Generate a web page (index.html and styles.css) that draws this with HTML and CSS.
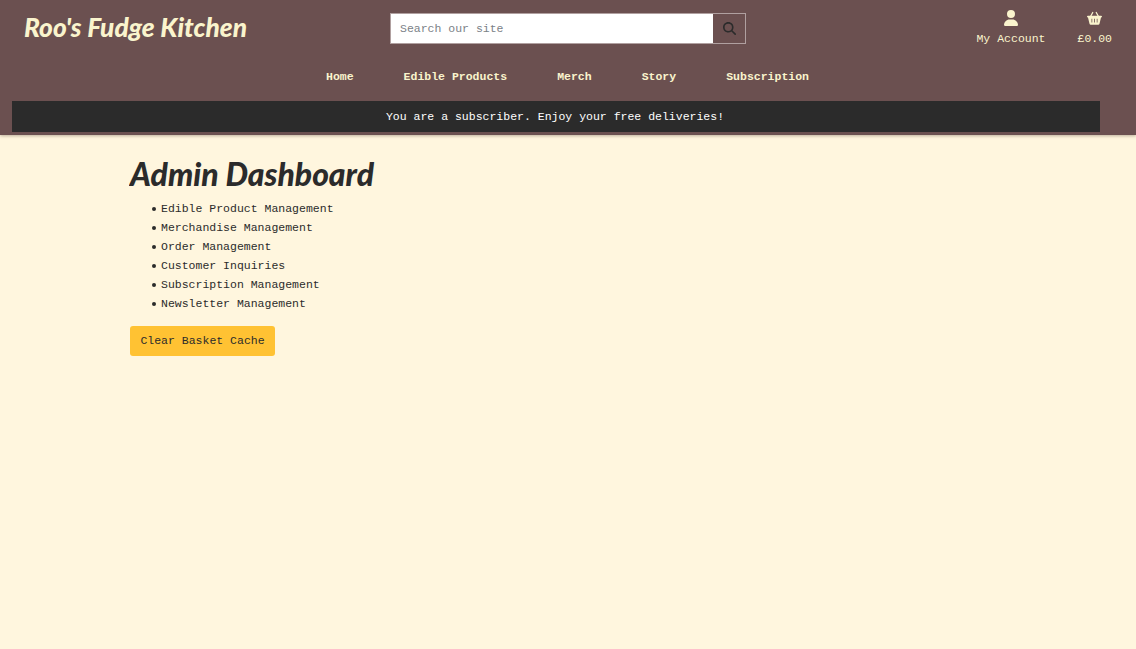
FILE: index.html
```html
<!DOCTYPE html>
<html lang="en">
<head>
<meta charset="utf-8">
<title>Roo's Fudge Kitchen</title>
<link rel="stylesheet" href="styles.css">
</head>
<body>
<header class="header">
  <div class="top">
    <a class="brand"><svg width="240" height="44"><text x="0" y="29" textLength="223" lengthAdjust="spacingAndGlyphs">Roo's Fudge Kitchen</text></svg></a>
    <form class="search">
      <input class="search-input" type="text" placeholder="Search our site">
      <button class="search-button" type="button" aria-label="Search"><svg width="13" height="13" viewBox="0 0 512 512"><path fill="currentColor" d="M416 208c0 45.900-14.900 88.300-40 122.700L502.600 457.400c12.500 12.500 12.500 32.800 0 45.300s-32.800 12.500-45.300 0L330.700 376c-34.400 25.200-76.800 40-122.700 40C93.100 416 0 322.900 0 208S93.100 0 208 0S416 93.100 416 208zM208 352a144 144 0 1 0 0-288 144 144 0 1 0 0 288z"/></svg></button>
    </form>
    <div class="links">
      <a class="link"><svg width="14" height="16" viewBox="0 0 448 512"><path fill="currentColor" d="M224 256A128 128 0 1 0 224 0a128 128 0 1 0 0 256zm-45.700 48C79.800 304 0 383.800 0 482.300C0 498.700 13.300 512 29.700 512H418.300c16.400 0 29.700-13.300 29.700-29.700C448 383.800 368.200 304 269.700 304H178.300z"/></svg><span>My Account</span></a>
      <a class="link"><svg width="15" height="16" viewBox="0 0 30 32"><path fill="none" stroke="currentColor" stroke-width="2.600" stroke-linecap="round" d="M7 13 11.500 5M23 13 18.500 5"/><path fill="currentColor" fill-rule="evenodd" d="M2 11.500H28Q30 11.500 30 13.200T28 15L25 27.500Q24.500 29.500 22.500 29.500H7.500Q5.500 29.500 5 27.500L2 15Q0 15 0 13.200T2 11.500ZM9 17.500V25H10.500V17.500ZM14.200 17.500V25H15.800V17.500ZM19.500 17.500V25H21V17.500Z"/></svg><span>£0.00</span></a>
    </div>
  </div>
  <nav class="nav"><a>Home</a><a>Edible Products</a><a>Merch</a><a>Story</a><a>Subscription</a></nav>
  <div class="banner">You are a subscriber. Enjoy your free deliveries!</div>
</header>
<main class="main">
  <h1 class="title"><svg width="280" height="42"><text x="1" y="31" textLength="244" lengthAdjust="spacingAndGlyphs">Admin Dashboard</text></svg></h1>
  <ul class="list">
    <li>Edible Product Management</li>
    <li>Merchandise Management</li>
    <li>Order Management</li>
    <li>Customer Inquiries</li>
    <li>Subscription Management</li>
    <li>Newsletter Management</li>
  </ul>
  <button class="clear" type="button">Clear Basket Cache</button>
</main>
</body>
</html>
```
FILE: styles.css
```css
* { box-sizing: border-box; }
body {
  margin: 0;
  min-height: 100vh;
  background: #fff6de;
  color: #2b2b2b;
  font: 11.5px/19px "Liberation Mono", monospace;
}
svg { display: block; }
.header {
  height: 135px;
  background: #6b5050;
  color: #faf4cd;
  box-shadow: 0 1px 3px rgba(60, 40, 30, .35);
}
.top {
  display: grid;
  grid-template-columns: 366px 356px 1fr;
  height: 64px;
  padding-left: 24px;
}
.brand { padding-top: 8px; }
.brand text {
  font: italic 900 26px Lato, sans-serif;
  fill: currentColor;
}
.search {
  display: flex;
  height: 31px;
  margin-top: 13px;
  border: 1px solid #b0a0a0;
}
.search-input {
  flex: 1;
  min-width: 0;
  border: 0;
  padding: 0 9px;
  background: #fff;
  font: inherit;
}
.search-input::placeholder { color: #7b8187; opacity: 1; }
.search-button {
  display: flex;
  align-items: center;
  justify-content: center;
  width: 32px;
  padding: 0;
  border: 0;
  background: #6b5050;
  color: #2b2b2b;
}
.links {
  display: flex;
  justify-content: flex-end;
  gap: 32px;
  padding: 10px 24px 0 0;
}
.link {
  display: flex;
  flex-direction: column;
  align-items: center;
  gap: 3px;
}
.nav {
  display: flex;
  justify-content: center;
  gap: 50px;
  height: 37px;
  padding: 3px 1px 0 0;
  font-weight: 700;
}
.banner {
  width: 1088px;
  height: 31px;
  margin-left: 12px;
  padding-right: 2px;
  background: #2b2b2b;
  color: #fff;
  line-height: 32px;
  text-align: center;
}
.main { padding: 20px 130px 0; }
.title { margin: 0 0 2px -1px; }
.title text {
  font: italic 900 33px Lato, sans-serif;
  fill: currentColor;
}
.list {
  margin: 0 0 13px;
  padding: 0 0 0 21px;
  list-style: none;
}
.list li {
  display: flex;
  align-items: center;
  gap: 5px;
}
.list li::before {
  content: "";
  width: 4px;
  height: 4px;
  margin-left: 1px;
  border-radius: 50%;
  background: currentColor;
}
.clear {
  display: block;
  width: 145px;
  height: 30px;
  padding: 0 0 1px;
  border: 0;
  border-radius: 3px;
  background: #ffc233;
  color: #2b2b2b;
  font: inherit;
}
```
